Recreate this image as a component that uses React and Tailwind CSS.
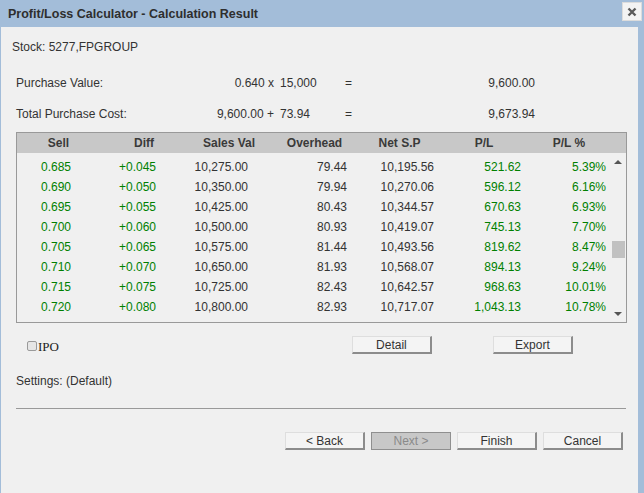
import React from "react";

const rows = [
  ["0.685", "+0.045", "10,275.00", "79.44", "10,195.56", "521.62", "5.39%"],
  ["0.690", "+0.050", "10,350.00", "79.94", "10,270.06", "596.12", "6.16%"],
  ["0.695", "+0.055", "10,425.00", "80.43", "10,344.57", "670.63", "6.93%"],
  ["0.700", "+0.060", "10,500.00", "80.93", "10,419.07", "745.13", "7.70%"],
  ["0.705", "+0.065", "10,575.00", "81.44", "10,493.56", "819.62", "8.47%"],
  ["0.710", "+0.070", "10,650.00", "81.93", "10,568.07", "894.13", "9.24%"],
  ["0.715", "+0.075", "10,725.00", "82.43", "10,642.57", "968.63", "10.01%"],
  ["0.720", "+0.080", "10,800.00", "82.93", "10,717.07", "1,043.13", "10.78%"],
  ["0.725", "+0.085", "10,875.00", "83.44", "10,791.56", "1,117.62", "11.55%"],
];

const headers = ["Sell", "Diff", "Sales Val", "Overhead", "Net S.P", "P/L", "P/L %"];

// right padding + colour for each column of the body
const cellCls = [
  "pr-[29px] text-[#008000]",
  "pr-[32px] text-[#008000]",
  "pr-[22px] text-[#333]",
  "pr-[12px] text-[#333]",
  "pr-[6px] text-[#333]",
  "pr-[7px] text-[#008000]",
  "pr-[4px] text-[#008000]",
];

const grid = "grid grid-cols-[83px_88px_82px_89px_81px_88px_82px]";

function Btn({ children, disabled }) {
  if (disabled) {
    return (
      <div className="w-[80px] h-[18px] flex items-center justify-center bg-[#c8c8c8] border border-[#8f8f8f] text-[#8a8a8a]">
        {children}
      </div>
    );
  }
  return (
    <div className="w-[80px] h-[18px] flex items-center justify-center bg-[#f4f4f4] border-t border-l border-t-[#dedede] border-l-[#dedede] border-r-2 border-b-2 border-r-[#8c8c8c] border-b-[#8c8c8c] text-[#333]">
      {children}
    </div>
  );
}

export default function App() {
  return (
    <div className="w-[644px] h-[493px] bg-[#a3bdd9] flex flex-col font-['Liberation_Sans',Arial,sans-serif] text-[12px] leading-[14px] text-[#333] overflow-hidden">
      {/* Title bar */}
      <div className="h-[27px] flex items-center justify-between pl-[8px] pr-[2px] shrink-0">
        <span className="font-bold text-[12.5px] text-[#2e2e2e] mt-px">Profit/Loss Calculator - Calculation Result</span>
        <div className="w-[20px] h-[19px] bg-[#f3f3f3] border border-[#dcdcdc] flex items-center justify-center -mt-[4px]">
          <svg width="10" height="10" viewBox="0 0 10 10">
            <path d="M1.5 1.5L8.5 8.5M8.5 1.5L1.5 8.5" stroke="#5a5a5a" strokeWidth="2.4" />
          </svg>
        </div>
      </div>

      {/* Body */}
      <div className="flex-1 bg-[#f0f0f0] ml-px mr-[6px] flex flex-col">
        <div className="mt-[13px] pl-[11px]">Stock: 5277,FPGROUP</div>

        <div className="mt-[22px] flex pl-[15px]">
          <span className="w-[200px]">Purchase Value:</span>
          <span className="w-[58px] text-right">0.640 x</span>
          <span className="w-[6px]" />
          <span className="w-[65px]">15,000</span>
          <span className="w-[20px]">=</span>
          <span className="w-[170px] text-right">9,600.00</span>
        </div>

        <div className="mt-[17px] flex pl-[15px]">
          <span className="w-[200px]">Total Purchase Cost:</span>
          <span className="w-[58px] text-right">9,600.00 +</span>
          <span className="w-[6px]" />
          <span className="w-[65px]">73.94</span>
          <span className="w-[20px]">=</span>
          <span className="w-[170px] text-right">9,673.94</span>
        </div>

        {/* Result table */}
        <div className="mt-[11px] ml-[15px] w-[611px] h-[191px] border border-[#999] flex flex-col">
          <div className={`${grid} h-[20px] bg-[#c8c8c8] items-center font-bold text-[#3a3a3a] shrink-0`}>
            {headers.map((h) => (
              <div key={h} className="text-center">{h}</div>
            ))}
          </div>
          <div className="flex-1 flex overflow-hidden">
            <div className="w-[593px] pt-[4px] overflow-hidden">
              {rows.map((r, i) => (
                <div key={i} className={`${grid} h-[20px] items-center`}>
                  {r.map((v, j) => (
                    <div key={j} className={`text-right ${cellCls[j]}`}>{v}</div>
                  ))}
                </div>
              ))}
            </div>
            {/* scrollbar */}
            <div className="flex-1 flex flex-col items-center pt-[7px] pb-[6px]">
              <div className="w-0 h-0 border-l-[4px] border-r-[4px] border-b-[4px] border-l-transparent border-r-transparent border-b-[#555]" />
              <div className="mt-[77px] w-[13px] h-[17px] bg-[#c1c1c1]" />
              <div className="flex-1" />
              <div className="w-0 h-0 border-l-[4px] border-r-[4px] border-t-[4px] border-l-transparent border-r-transparent border-t-[#555]" />
            </div>
          </div>
        </div>

        {/* IPO + Detail/Export */}
        <div className="mt-[13px] h-[18px] flex items-center">
          <div className="ml-[26px] w-[10px] h-[10px] mt-[2px] border border-[#9a9a9a] rounded-[2px] bg-[#e6e6e6]" />
          <span className="ml-px mt-[4px] font-['Liberation_Serif',serif] text-[13px] text-[#222]">IPO</span>
          <div className="ml-[293px]">
            <Btn>Detail</Btn>
          </div>
          <div className="ml-[61px]">
            <Btn>Export</Btn>
          </div>
        </div>

        <div className="mt-[20px] pl-[15px]">Settings: (Default)</div>

        <div className="mt-[20px] ml-[15px] w-[610px] h-px bg-[#999]" />

        <div className="mt-[23px] flex justify-end gap-[6px] pr-[15px]">
          <Btn>&lt; Back</Btn>
          <Btn disabled>Next &gt;</Btn>
          <Btn>Finish</Btn>
          <Btn>Cancel</Btn>
        </div>
      </div>
    </div>
  );
}
